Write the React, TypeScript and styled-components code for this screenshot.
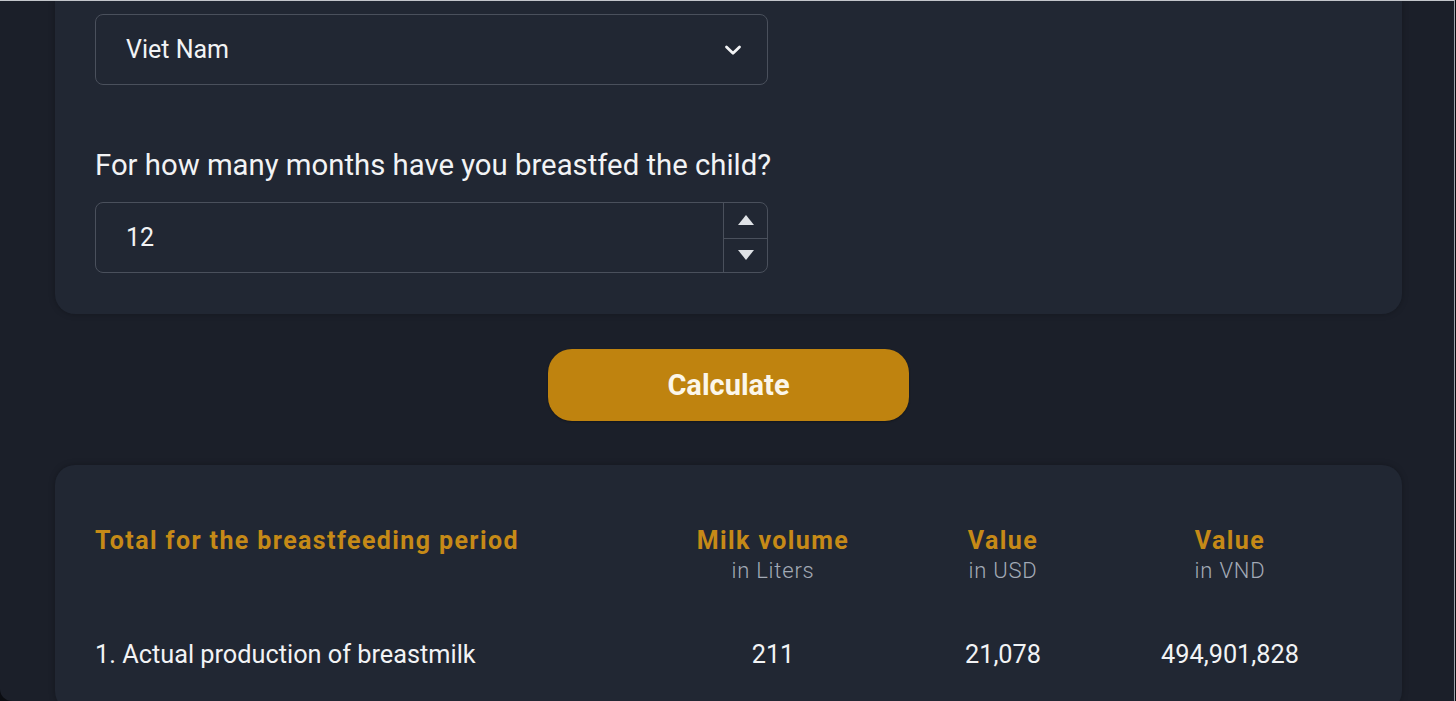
import { createGlobalStyle, styled } from 'styled-components'

const GlobalStyle = createGlobalStyle`
  html, body {
    margin: 0;
    padding: 0;
    background: #0b0d12;
  }
  body {
    font-family: Roboto, 'Noto Sans', 'Liberation Sans', sans-serif;
    -webkit-font-smoothing: antialiased;
  }
`

const Frame = styled.div`
  width: 1451px;
  height: 700px;
  padding-left: 3px;
  overflow: hidden;
  background: #1b1f29;
  border-top: 1px solid #c3c6cb;
  border-right: 1px solid #9ea3ab;
  border-bottom-left-radius: 12px;
  display: flex;
  flex-direction: column;
  align-items: center;
`

const Panel = styled.section<{ top?: boolean }>`
  box-sizing: border-box;
  width: 1347px;
  background: #212733;
  border-radius: ${props => (props.top ? '0 0 20px 20px' : '20px')};
  padding: ${props => (props.top ? '13px 40px 41px' : '60px 40px 40px')};
  box-shadow: 0 0 6px rgba(0, 0, 0, 0.25);
  flex-shrink: 0;
`

const FieldBox = styled.div`
  box-sizing: border-box;
  width: 673px;
  height: 71px;
  border: 1px solid #4a505c;
  border-radius: 8px;
  display: flex;
  align-items: center;
  color: #f2f3f5;
  font-size: 25px;
`

const FieldValue = styled.span`
  flex: 1;
  padding-left: 30px;
`

const Chevron = styled.span`
  width: 64px;
  display: flex;
  justify-content: center;
  padding-right: 2px;
`

const Label = styled.label`
  display: block;
  margin: 63px 0 20px;
  color: #f2f3f5;
  font-size: 29.3px;
  line-height: 34px;
`

const Spinner = styled.div`
  width: 43px;
  align-self: stretch;
  border-left: 1px solid #4a505c;
  display: grid;
  grid-template-rows: 1fr 1fr;
`

const SpinBtn = styled.div<{ last?: boolean }>`
  display: flex;
  align-items: center;
  justify-content: center;
  border-top: ${props => (props.last ? '1px solid #4a505c' : 'none')};
`

const ButtonRow = styled.div`
  display: flex;
  justify-content: center;
  padding: 35px 0 44px;
`

const CalcButton = styled.button`
  width: 361px;
  height: 72px;
  border: none;
  border-radius: 24px;
  background: #bf830f;
  color: #fbf6ea;
  font-family: Roboto, 'Liberation Sans', sans-serif;
  font-size: 29px;
  font-weight: 700;
  box-shadow: 0 1px 2px rgba(0, 0, 0, 0.3);
`

const Table = styled.div`
  display: grid;
  grid-template-columns: 562px 232px 228px 226px;
  row-gap: 54px;
`

const HeadCell = styled.div<{ first?: boolean }>`
  display: flex;
  flex-direction: column;
  align-items: ${props => (props.first ? 'flex-start' : 'center')};
`

const HeadTitle = styled.span`
  color: #c68a17;
  font-size: 25px;
  font-weight: 700;
  letter-spacing: 1.4px;
  line-height: 32px;
`

const HeadSub = styled.span`
  color: #a3aab6;
  font-size: 22px;
  font-weight: 300;
  letter-spacing: 0.8px;
  line-height: 28px;
`

const Cell = styled.div<{ first?: boolean }>`
  color: #f2f3f5;
  font-size: 25.3px;
  line-height: 32px;
  text-align: ${props => (props.first ? 'left' : 'center')};
`

const columns = [
  { title: 'Milk volume', sub: 'in Liters' },
  { title: 'Value', sub: 'in USD' },
  { title: 'Value', sub: 'in VND' },
]

const rows = [['1. Actual production of breastmilk', '211', '21,078', '494,901,828']]

export default function App() {
  return (
    <>
      <GlobalStyle />
      <Frame>
        <Panel top>
          <FieldBox>
            <FieldValue>Viet Nam</FieldValue>
            <Chevron>
              <svg width="18" height="12" viewBox="0 0 18 12">
                <path d="M2.5 3 L9 9.2 L15.5 3" fill="none" stroke="#f2f3f5" strokeWidth="2.8" strokeLinecap="round" strokeLinejoin="round" />
              </svg>
            </Chevron>
          </FieldBox>
          <Label>For how many months have you breastfed the child?</Label>
          <FieldBox>
            <FieldValue>12</FieldValue>
            <Spinner>
              <SpinBtn>
                <svg width="18" height="12" viewBox="0 0 18 12">
                  <path d="M9 1 L17 11 L1 11 Z" fill="#dfe2e6" />
                </svg>
              </SpinBtn>
              <SpinBtn last>
                <svg width="18" height="12" viewBox="0 0 18 12">
                  <path d="M1 1 L17 1 L9 11 Z" fill="#dfe2e6" />
                </svg>
              </SpinBtn>
            </Spinner>
          </FieldBox>
        </Panel>
        <ButtonRow>
          <CalcButton>Calculate</CalcButton>
        </ButtonRow>
        <Panel>
          <Table>
            <HeadCell first>
              <HeadTitle>Total for the breastfeeding period</HeadTitle>
            </HeadCell>
            {columns.map((c, i) => (
              <HeadCell key={i}>
                <HeadTitle>{c.title}</HeadTitle>
                <HeadSub>{c.sub}</HeadSub>
              </HeadCell>
            ))}
            {rows.map(r =>
              r.map((v, i) => (
                <Cell key={v} first={i === 0}>
                  {v}
                </Cell>
              )),
            )}
          </Table>
        </Panel>
      </Frame>
    </>
  )
}
